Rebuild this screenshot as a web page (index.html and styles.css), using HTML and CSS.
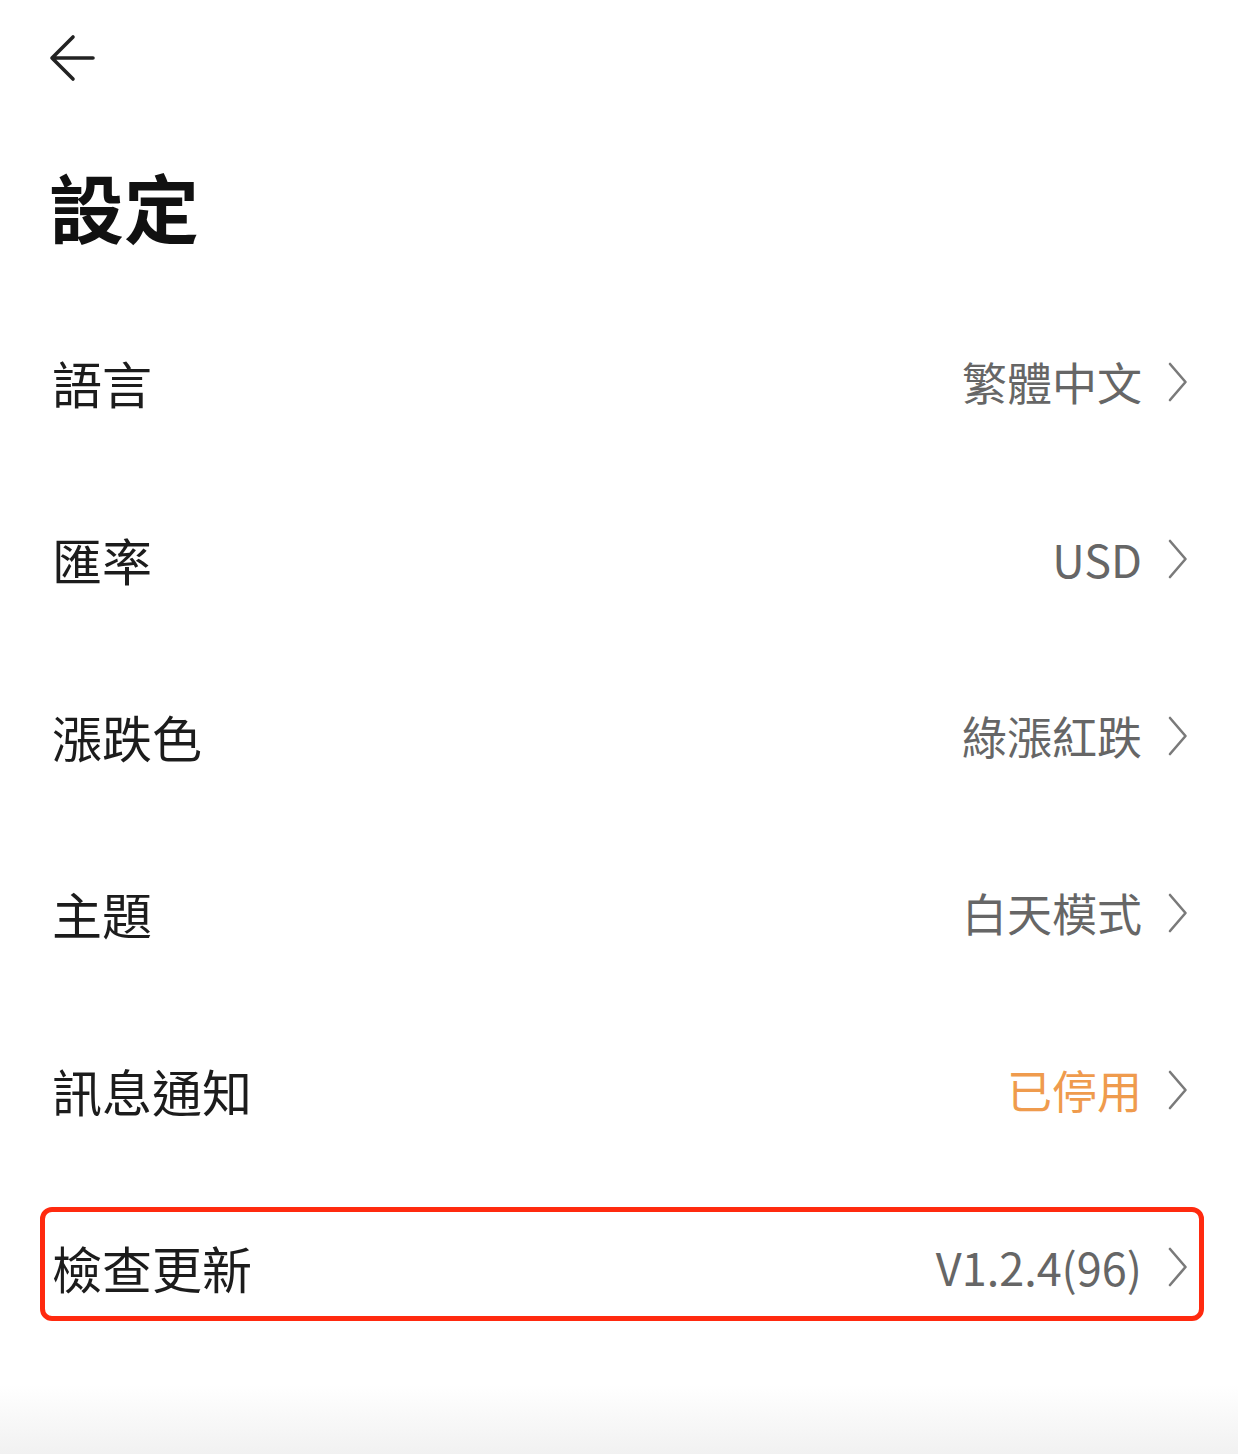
FILE: index.html
```html
<!DOCTYPE html>
<html lang="zh-Hant">
<head>
<meta charset="utf-8">
<title>設定</title>
<link rel="stylesheet" href="styles.css">
</head>
<body>
<div class="page">
  <header class="topbar">
    <svg class="back" width="46" height="48" viewBox="0 0 46 48" aria-label="返回">
      <path d="M24 3 L3 24 L24 45 M3 24 H44" fill="none" stroke="#222" stroke-width="3.6" stroke-linecap="round" stroke-linejoin="round"/>
    </svg>
  </header>
  <h1 class="title">設定</h1>
  <ul class="list">
    <li class="row"><span class="label">語言</span><span class="value">繁體中文</span><svg class="chev" width="20" height="40" viewBox="0 0 20 40"><path d="M2 2 L17.5 20 L2 38" fill="none" stroke="#7a7a7a" stroke-width="2.6" stroke-linecap="round" stroke-linejoin="round"/></svg></li>
    <li class="row"><span class="label">匯率</span><span class="value">USD</span><svg class="chev" width="20" height="40" viewBox="0 0 20 40"><path d="M2 2 L17.5 20 L2 38" fill="none" stroke="#7a7a7a" stroke-width="2.6" stroke-linecap="round" stroke-linejoin="round"/></svg></li>
    <li class="row"><span class="label">漲跌色</span><span class="value">綠漲紅跌</span><svg class="chev" width="20" height="40" viewBox="0 0 20 40"><path d="M2 2 L17.5 20 L2 38" fill="none" stroke="#7a7a7a" stroke-width="2.6" stroke-linecap="round" stroke-linejoin="round"/></svg></li>
    <li class="row"><span class="label">主題</span><span class="value">白天模式</span><svg class="chev" width="20" height="40" viewBox="0 0 20 40"><path d="M2 2 L17.5 20 L2 38" fill="none" stroke="#7a7a7a" stroke-width="2.6" stroke-linecap="round" stroke-linejoin="round"/></svg></li>
    <li class="row"><span class="label">訊息通知</span><span class="value value-warn">已停用</span><svg class="chev" width="20" height="40" viewBox="0 0 20 40"><path d="M2 2 L17.5 20 L2 38" fill="none" stroke="#7a7a7a" stroke-width="2.6" stroke-linecap="round" stroke-linejoin="round"/></svg></li>
    <li class="row row-highlight"><span class="label">檢查更新</span><span class="value">V1.2.4(96)</span><svg class="chev" width="20" height="40" viewBox="0 0 20 40"><path d="M2 2 L17.5 20 L2 38" fill="none" stroke="#7a7a7a" stroke-width="2.6" stroke-linecap="round" stroke-linejoin="round"/></svg><span class="highlight-box"></span></li>
  </ul>
</div>
</body>
</html>
```

FILE: styles.css
```css
html, body {
  margin: 0;
  padding: 0;
}
body {
  width: 1238px;
  height: 1454px;
  overflow: hidden;
  background: linear-gradient(to bottom, #ffffff 0px, #ffffff 1385px, #f1f1f1 1454px);
  font-family: "Noto Sans CJK TC", "Noto Sans", sans-serif;
  color: #1a1a1a;
}
.page {
  display: flex;
  flex-direction: column;
}
.topbar {
  height: 116px;
  padding: 34px 0 0 49px;
  box-sizing: border-box;
}
.back {
  display: block;
}
.title {
  margin: 52px 0 0 49px;
  font-size: 75px;
  line-height: 75px;
  font-weight: 700;
  color: #111;
}
.list {
  list-style: none;
  margin: 50px 0 0 0;
  padding: 0;
}
.row {
  position: relative;
  height: 177px;
  display: flex;
  align-items: center;
  padding: 0 50px 0 52px;
}
.label {
  font-size: 50px;
  line-height: 1;
  color: #1c1c1c;
  flex: 1;
}
.value {
  font-size: 45px;
  line-height: 1;
  color: #666;
  margin-right: 26px;
}
.value-warn {
  color: #ef9b4d;
}
.chev {
  display: block;
}
.highlight-box {
  position: absolute;
  left: 40px;
  right: 34px;
  top: 29px;
  height: 114px;
  box-sizing: border-box;
  border: 5px solid #ff2a0f;
  border-radius: 12px;
  pointer-events: none;
}
```
